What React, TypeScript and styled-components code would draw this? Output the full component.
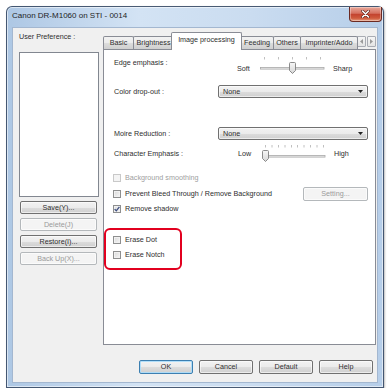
import React from 'react';
import styled, { createGlobalStyle } from 'styled-components';

const GlobalStyle = createGlobalStyle`
  html, body {
    margin: 0;
    padding: 0;
    background: #ffffff;
  }
  body {
    font-family: "Liberation Sans", Arial, sans-serif;
    font-size: 7.2px;
    color: #2e2e2e;
  }
  * {
    box-sizing: border-box;
  }
`;

// 창 프레임
const Window = styled.div`
  margin: 6px 0 0 6px;
  width: 378px;
  height: 382px;
  border: 1px solid rgba(40, 58, 84, 0.8);
  border-radius: 6px 6px 0 0;
  background: linear-gradient(90deg, #adc7e4 0%, #d3e3f4 35%, #cadcf0 65%, #b6cee9 100%);
  box-shadow: inset 0 0 0 1px rgba(255, 255, 255, 0.55), 1px 1px 2px rgba(0, 0, 0, 0.25);
  display: flex;
  flex-direction: column;
`;

const TitleBar = styled.div`
  height: 21px;
  display: flex;
  align-items: flex-start;
  padding-left: 5px;
`;

const TitleText = styled.div`
  font-size: 8px;
  line-height: 18px;
  color: #1e1e1e;
`;

const CloseButton = styled.div`
  margin-left: auto;
  margin-right: 1px;
  width: 33px;
  height: 15px;
  border: 1px solid #6b2a22;
  border-top: none;
  border-radius: 0 0 4px 4px;
  background: linear-gradient(#e9a99b 0%, #d5705f 45%, #c3432f 52%, #cf5a3c 80%, #e79f82 100%);
  box-shadow: inset 0 0 0 1px rgba(255, 255, 255, 0.35);
  display: flex;
  align-items: center;
  justify-content: center;
`;

const Client = styled.div`
  margin: 0 6px 5px 6px;
  height: 354px;
  background: #f0f0f0;
  box-shadow: 0 0 0 1px #a3b7d0;
  display: flex;
  flex-direction: column;
  padding-top: 4px;
`;

const Main = styled.div`
  height: 313px;
  display: flex;
  gap: 4px;
  padding-left: 6px;
`;

// 왼쪽 사용자 설정
const LeftColumn = styled.div`
  width: 80px;
  display: flex;
  flex-direction: column;
`;

const PrefLabel = styled.div`
  line-height: 10px;
  height: 10px;
`;

const PrefList = styled.div`
  margin-top: 10px;
  height: 145px;
  background: #fff;
  border: 1px solid #828790;
`;

const PushButton = styled.div<{ $w: number; $h: number; $disabled?: boolean; $focus?: boolean }>`
  width: ${(p) => p.$w}px;
  height: ${(p) => p.$h}px;
  border: 1px solid ${(p) => (p.$disabled ? '#b4b8bb' : p.$focus ? '#3c7fb1' : '#707070')};
  border-radius: 2px;
  background: ${(p) =>
    p.$disabled
      ? '#f4f4f4'
      : 'linear-gradient(#f2f2f2 0%, #ebebeb 50%, #dddddd 51%, #cfcfcf 100%)'};
  box-shadow: inset 0 0 0 1px ${(p) => (p.$focus ? 'rgba(170, 220, 250, 0.9)' : 'rgba(255, 255, 255, 0.6)')};
  color: ${(p) => (p.$disabled ? '#9a9a9a' : 'inherit')};
  display: flex;
  align-items: center;
  justify-content: center;
  line-height: 10px;
  flex-shrink: 0;
`;

const SideButton = styled(PushButton)`
  margin: 4px 0 0 1px;
`;

const SettingButton = styled(PushButton)`
  margin-left: auto;
`;

// 탭 영역
const TabArea = styled.div`
  width: 273px;
  display: flex;
  flex-direction: column;
`;

const TabStrip = styled.div`
  height: 17px;
  display: flex;
  align-items: flex-end;
  position: relative;
  z-index: 1;
`;

const Tab = styled.div<{ $w: number; $active?: boolean; $first?: boolean }>`
  width: ${(p) => (p.$active ? p.$w + 4 : p.$w)}px;
  height: ${(p) => (p.$active ? 18 : 13)}px;
  margin-left: ${(p) => (p.$first ? 0 : p.$active ? -3 : -1)}px;
  margin-right: ${(p) => (p.$active ? -1 : 0)}px;
  margin-bottom: ${(p) => (p.$active ? -1 : 0)}px;
  border: 1px solid #898c95;
  border-bottom: none;
  border-radius: 2px 2px 0 0;
  background: ${(p) =>
    p.$active ? '#ffffff' : 'linear-gradient(#f2f2f2 0%, #ebebeb 50%, #dddddd 51%, #cfcfcf 100%)'};
  text-align: center;
  white-space: nowrap;
  overflow: hidden;
  line-height: ${(p) => (p.$active ? 13 : 12)}px;
  position: relative;
  z-index: ${(p) => (p.$active ? 2 : 1)};
`;

const TabScroller = styled.div`
  margin-left: -1px;
  margin-bottom: 2px;
  width: 19px;
  height: 11px;
  display: flex;
  gap: 1px;
  justify-content: flex-end;
`;

const ScrollArrow = styled.div`
  width: 9px;
  height: 11px;
  border: 1px solid #a9acb3;
  border-radius: 1px;
  background: linear-gradient(#f6f6f6, #e4e4e4);
  display: flex;
  align-items: center;
  justify-content: center;
`;

const Panel = styled.div`
  flex: 1;
  border: 1px solid #898c95;
  background: #ffffff;
  display: flex;
  flex-direction: column;
  padding: 0 7px 0 10px;
`;

const Row = styled.div<{ $top: number; $h: number; $align?: string }>`
  margin-top: ${(p) => p.$top}px;
  height: ${(p) => p.$h}px;
  display: flex;
  align-items: ${(p) => p.$align || 'center'};
`;

const FieldLabel = styled.div<{ $pad?: number }>`
  width: 104px;
  flex-shrink: 0;
  line-height: 10px;
  padding-top: ${(p) => p.$pad || 0}px;
`;

const SliderGroup = styled.div<{ $ml: number }>`
  margin-left: ${(p) => p.$ml}px;
  display: flex;
  align-items: flex-start;
`;

const SideText = styled.div<{ $w?: number; $ml?: number; $pad: number }>`
  width: ${(p) => (p.$w ? `${p.$w}px` : 'auto')};
  margin-left: ${(p) => p.$ml || 0}px;
  padding-top: ${(p) => p.$pad}px;
  line-height: 10px;
`;

const SliderBox = styled.svg<{ $mt: number }>`
  display: block;
  margin-top: ${(p) => p.$mt}px;
  flex-shrink: 0;
`;

const Select = styled.div`
  width: 150px;
  height: 13px;
  border: 1px solid #707070;
  border-radius: 2px;
  background: linear-gradient(#f2f2f2 0%, #ebebeb 50%, #dddddd 51%, #cfcfcf 100%);
  box-shadow: inset 0 0 0 1px rgba(255, 255, 255, 0.6);
  display: flex;
  align-items: center;
  padding: 0 4px 0 4px;
  line-height: 10px;
`;

const SelectArrow = styled.svg`
  margin-left: auto;
  display: block;
`;

const CheckLine = styled.div<{ $shift?: number; $disabled?: boolean }>`
  margin-left: ${(p) => p.$shift || 0}px;
  height: 10px;
  display: flex;
  align-items: center;
  gap: 4px;
  line-height: 10px;
  color: ${(p) => (p.$disabled ? '#a0a0a0' : 'inherit')};
`;

const CheckBox = styled.div<{ $disabled?: boolean }>`
  width: 8px;
  height: 8px;
  flex-shrink: 0;
  border: 1px solid ${(p) => (p.$disabled ? '#c9c9c9' : '#8e8f8f')};
  background: ${(p) => (p.$disabled ? '#f4f4f4' : 'linear-gradient(135deg, #d8d8d8 0%, #f7f7f7 100%)')};
  box-shadow: inset 0 0 0 1px ${(p) => (p.$disabled ? '#f4f4f4' : '#f1f1f1')};
  display: flex;
  align-items: center;
  justify-content: center;
`;

const HighlightBox = styled.div`
  margin: 14px 0 0 -10px;
  width: 78px;
  height: 42px;
  border: 2px solid #e2001f;
  border-radius: 6px;
  padding: 5px 0 0 7px;
  display: flex;
  flex-direction: column;
  gap: 5px;
`;

const Footer = styled.div`
  margin-top: 15px;
  display: flex;
  justify-content: flex-end;
  gap: 6px;
  padding-right: 4px;
`;

type SliderProps = { ticks: number[]; thumb: number; trackEnd: number; mt: number };

const Trackbar: React.FC<SliderProps> = ({ ticks, thumb, trackEnd, mt }) => (
  <SliderBox $mt={mt} width={68} height={18} viewBox="0 0 68 18">
    <defs>
      <linearGradient id={`thumb${thumb}`} x1="0" y1="0" x2="0" y2="1">
        <stop offset="0" stopColor="#f7f7f7" />
        <stop offset="1" stopColor="#d6d6d6" />
      </linearGradient>
    </defs>
    {ticks.map((t) => (
      <line key={t} x1={t} y1={0} x2={t} y2={2.5} stroke="#c0c0c0" strokeWidth={1} />
    ))}
    <rect x={2.5} y={10.5} width={trackEnd - 2.5} height={1.6} fill="#ececec" stroke="#a9a9a9" strokeWidth={0.8} />
    <path
      d={`M${thumb - 3} 6.5 Q${thumb - 3} 5.5 ${thumb - 2} 5.5 H${thumb + 2} Q${thumb + 3} 5.5 ${thumb + 3} 6.5 V13.5 L${thumb} 16.5 L${thumb - 3} 13.5 Z`}
      fill={`url(#thumb${thumb})`}
      stroke="#7f7f7f"
      strokeWidth={0.9}
    />
  </SliderBox>
);

const Check: React.FC = () => (
  <svg width={6} height={6} viewBox="0 0 6 6">
    <path d="M0.6 3.1 L2.3 4.8 L5.4 0.8" fill="none" stroke="#3d4e80" strokeWidth={1.3} />
  </svg>
);

const DropArrow: React.FC = () => (
  <SelectArrow width={5} height={3} viewBox="0 0 5 3">
    <path d="M0 0 H5 L2.5 3 Z" fill="#222" />
  </SelectArrow>
);

const tabs = [
  { label: 'Basic', w: 31 },
  { label: 'Brightness', w: 41 },
  { label: 'Image processing', w: 67, active: true },
  { label: 'Feeding', w: 34 },
  { label: 'Others', w: 28 },
  { label: 'Imprinter/Addo', w: 58 },
];

const edgeTicks = [6.5, 20.5, 34.5, 48.5, 62.5];
const charTicks = Array.from({ length: 10 }, (_, i) => Math.round((4 + i * 6.44) * 2) / 2 + 0.5);

const App: React.FC = () => {
  return (
    <>
      <GlobalStyle />
      <Window>
        <TitleBar>
          <TitleText>Canon DR-M1060 on STI - 0014</TitleText>
          <CloseButton>
            <svg width={9} height={8} viewBox="0 0 9 8">
              <path d="M1.5 1 L7.5 7 M7.5 1 L1.5 7" stroke="#5a2018" strokeWidth={2.8} strokeLinecap="round" />
              <path d="M1.5 1 L7.5 7 M7.5 1 L1.5 7" stroke="#ffffff" strokeWidth={1.6} strokeLinecap="round" />
            </svg>
          </CloseButton>
        </TitleBar>
        <Client>
          <Main>
            <LeftColumn>
              <PrefLabel>User Preference :</PrefLabel>
              <PrefList />
              <SideButton $w={77} $h={13}>Save(Y)...</SideButton>
              <SideButton $w={77} $h={13} $disabled>Delete(J)</SideButton>
              <SideButton $w={77} $h={13}>Restore(I)...</SideButton>
              <SideButton $w={77} $h={13} $disabled>Back Up(X)...</SideButton>
            </LeftColumn>
            <TabArea>
              <TabStrip>
                {tabs.map((t, i) => (
                  <Tab key={t.label} $w={t.w} $active={t.active} $first={i === 0}>
                    {t.label}
                  </Tab>
                ))}
                <TabScroller>
                  <ScrollArrow>
                    <svg width={3} height={5} viewBox="0 0 3 5">
                      <path d="M3 0 L0 2.5 L3 5 Z" fill="#9a9a9a" />
                    </svg>
                  </ScrollArrow>
                  <ScrollArrow>
                    <svg width={3} height={5} viewBox="0 0 3 5">
                      <path d="M0 0 L3 2.5 L0 5 Z" fill="#9a9a9a" />
                    </svg>
                  </ScrollArrow>
                </TabScroller>
              </TabStrip>
              <Panel>
                <Row $top={2} $h={24} $align="flex-start">
                  <FieldLabel $pad={6}>Edge emphasis :</FieldLabel>
                  <SliderGroup $ml={19}>
                    <SideText $w={21} $pad={12}>Soft</SideText>
                    <Trackbar mt={5} ticks={edgeTicks} thumb={34.5} trackEnd={66} />
                    <SideText $ml={7} $pad={12}>Sharp</SideText>
                  </SliderGroup>
                </Row>
                <Row $top={9} $h={13}>
                  <FieldLabel>Color drop-out :</FieldLabel>
                  <Select>
                    None
                    <DropArrow />
                  </Select>
                </Row>
                <Row $top={29} $h={13}>
                  <FieldLabel>Moire Reduction :</FieldLabel>
                  <Select>
                    None
                    <DropArrow />
                  </Select>
                </Row>
                <Row $top={5} $h={20} $align="flex-start">
                  <FieldLabel $pad={4}>Character Emphasis :</FieldLabel>
                  <SliderGroup $ml={20}>
                    <SideText $w={23} $pad={4}>Low</SideText>
                    <Trackbar mt={0} ticks={charTicks} thumb={4.5} trackEnd={64} />
                    <SideText $ml={5} $pad={4}>High</SideText>
                  </SliderGroup>
                </Row>
                <Row $top={8} $h={10}>
                  <CheckLine $shift={-1} $disabled>
                    <CheckBox $disabled />
                    Background smoothing
                  </CheckLine>
                </Row>
                <Row $top={4} $h={14}>
                  <CheckLine $shift={-1}>
                    <CheckBox />
                    Prevent Bleed Through / Remove Background
                  </CheckLine>
                  <SettingButton $w={65} $h={14} $disabled>
                    Setting...
                  </SettingButton>
                </Row>
                <Row $top={3} $h={10}>
                  <CheckLine $shift={-1}>
                    <CheckBox>
                      <Check />
                    </CheckBox>
                    Remove shadow
                  </CheckLine>
                </Row>
                <HighlightBox>
                  <CheckLine>
                    <CheckBox />
                    Erase Dot
                  </CheckLine>
                  <CheckLine>
                    <CheckBox />
                    Erase Notch
                  </CheckLine>
                </HighlightBox>
              </Panel>
            </TabArea>
          </Main>
          <Footer>
            <PushButton $w={54} $h={14} $focus>OK</PushButton>
            <PushButton $w={54} $h={14}>Cancel</PushButton>
            <PushButton $w={54} $h={14}>Default</PushButton>
            <PushButton $w={54} $h={14}>Help</PushButton>
          </Footer>
        </Client>
      </Window>
    </>
  );
};

export default App;
